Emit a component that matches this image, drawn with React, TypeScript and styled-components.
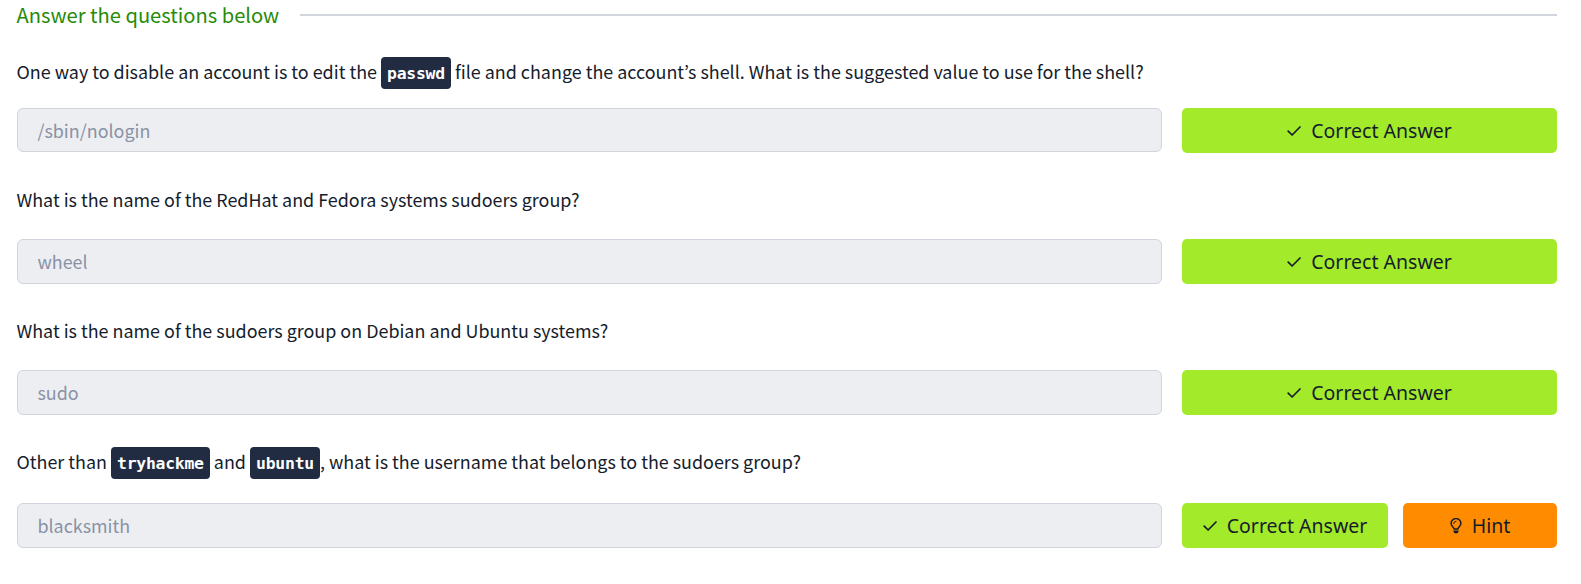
import React from 'react';
import styled, { createGlobalStyle } from 'styled-components';

const GlobalStyle = createGlobalStyle`
  *, *::before, *::after { box-sizing: border-box; }
  body {
    margin: 0;
    background: #ffffff;
    color: #151c2b;
    font-family: "Noto Sans CJK KR", "Source Sans Pro", sans-serif;
  }
`;

const Page = styled.main`
  height: 584px;
  padding: 0 24px 0 17px;
  overflow: hidden;
`;

const Header = styled.header`
  display: flex;
  align-items: center;
  gap: 21px;
  height: 30px;
  margin-bottom: 27px;
`;

const Title = styled.h2`
  margin: 0;
  font-size: 20.13px;
  font-weight: 400;
  line-height: 30px;
  text-indent: -0.4px;
  color: #258b08;
  white-space: nowrap;
`;

const Rule = styled.div`
  flex: 1;
  height: 2px;
  background: #d1d5dd;
`;

const Question = styled.section<{ $after?: number }>`
  margin-bottom: ${(p) => p.$after ?? 0}px;
`;

const Prompt = styled.p<{ $gap: number; $line: number }>`
  height: 32px;
  margin: 0 0 ${(p) => p.$gap}px;
  font-size: 17.92px;
  line-height: ${(p) => p.$line}px;
  text-indent: -0.5px;
  white-space: nowrap;
`;

const Code = styled.code`
  display: inline-block;
  height: 32px;
  padding: 0 6.1px;
  border-radius: 4px;
  background: #212c42;
  color: #ffffff;
  font: 700 16.4px/34px "DejaVu Sans Mono", monospace;
  letter-spacing: -0.23px;
  text-indent: 0;
  vertical-align: top;
`;

const AnswerRow = styled.div`
  display: flex;
  align-items: flex-start;
  gap: 20px;
  height: 45px;
`;

const Answer = styled.div<{ $height: number }>`
  flex: 0 0 1145px;
  height: ${(p) => p.$height}px;
  padding: 0 20px;
  border: 1px solid #d1d5dd;
  border-radius: 6px;
  background: #edeef2;
  color: #8a92a5;
  font-size: 17.92px;
  line-height: 42px;
  text-indent: -0.6px;
`;

const Actions = styled.div`
  display: flex;
  flex: 1;
  gap: 15px;
`;

const Button = styled.button<{ $tone: 'correct' | 'hint' }>`
  display: flex;
  flex: ${(p) => (p.$tone === 'hint' ? '0 0 154px' : '1')};
  align-items: center;
  justify-content: center;
  gap: 10px;
  height: 45px;
  padding: 0;
  border: 0;
  border-radius: 5px;
  background: ${(p) => (p.$tone === 'hint' ? '#ff8c00' : '#a3ea2a')};
  color: #151c2b;
  font-family: "Noto Sans", sans-serif;
  font-size: 19.5px;
  white-space: nowrap;
`;

const CheckIcon = () => (
  <svg width="14" height="14" viewBox="0 0 14 14" fill="none" stroke="currentColor" strokeWidth="1.7" strokeLinecap="round" strokeLinejoin="round">
    <path d="M1.2 7.2 5.1 11 13 3" />
  </svg>
);

const BulbIcon = () => (
  <svg width="12" height="16" viewBox="0 0 12 16" fill="none" stroke="currentColor" strokeWidth="1.5" strokeLinecap="round">
    <path d="M4 11C4 8.8 1.1 8.4 1.1 5.5a4.9 4.9 0 0 1 9.8 0C10.9 8.4 8 8.8 8 11Z" strokeLinejoin="round" />
    <path d="M3.6 5.6A2.4 2.4 0 0 1 6 3.3" strokeWidth="1" />
    <path d="M3.5 12.5H8.5V13.5Q8.2 15.6 6 15.6T3.5 13.5Z" fill="currentColor" stroke="none" />
  </svg>
);

interface Item {
  prompt: React.ReactNode;
  answer: string;
  gap: number;
  line: number;
  after?: number;
  height?: number;
  hint?: boolean;
}

const items: Item[] = [
  {
    prompt: <>One way to disable an account is to edit the <Code>passwd</Code> file and change the account’s shell. What is the suggested value to use for the shell?</>,
    answer: '/sbin/nologin',
    gap: 19,
    line: 28,
    after: 31,
    height: 44,
  },
  { prompt: 'What is the name of the RedHat and Fedora systems sudoers group?', answer: 'wheel', gap: 23, line: 30, after: 31 },
  { prompt: 'What is the name of the sudoers group on Debian and Ubuntu systems?', answer: 'sudo', gap: 23, line: 30, after: 32 },
  {
    prompt: <>Other than <Code>tryhackme</Code> and <Code>ubuntu</Code>, what is the username that belongs to the sudoers group?</>,
    answer: 'blacksmith',
    gap: 24,
    line: 28,
    hint: true,
  },
];

export default function App() {
  return (
    <>
      <GlobalStyle />
      <Page>
        <Header>
          <Title>Answer the questions below</Title>
          <Rule />
        </Header>
        {items.map((item) => (
          <Question key={item.answer} $after={item.after}>
            <Prompt $gap={item.gap} $line={item.line}>{item.prompt}</Prompt>
            <AnswerRow>
              <Answer $height={item.height ?? 45}>{item.answer}</Answer>
              <Actions>
                <Button $tone="correct"><CheckIcon />Correct Answer</Button>
                {item.hint && <Button $tone="hint"><BulbIcon />Hint</Button>}
              </Actions>
            </AnswerRow>
          </Question>
        ))}
      </Page>
    </>
  );
}
